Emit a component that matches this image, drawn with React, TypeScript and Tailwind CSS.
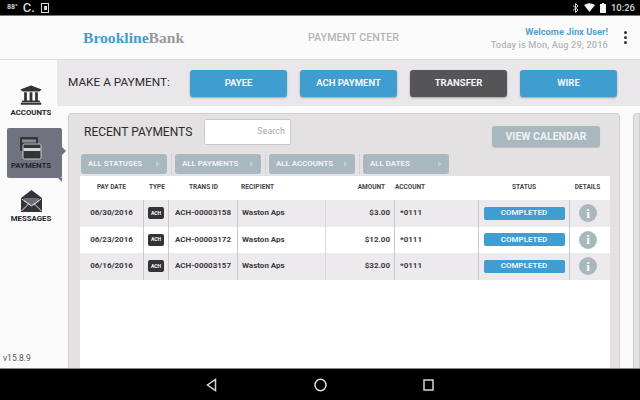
import { Fragment } from "react"
import { FaUniversity } from "react-icons/fa"

const sans = "font-['Roboto',sans-serif]"

const actions = [
  { label: "PAYEE", color: "bg-[#3f9dcf]" },
  { label: "ACH PAYMENT", color: "bg-[#3f9dcf]" },
  { label: "TRANSFER", color: "bg-[#555456]" },
  { label: "WIRE", color: "bg-[#3f9dcf]" },
]

const filters = ["ALL STATUSES", "ALL PAYMENTS", "ALL ACCOUNTS", "ALL DATES"]

const payments = [
  { date: "06/30/2016", id: "ACH-00003158", amount: "$3.00" },
  { date: "06/23/2016", id: "ACH-00003172", amount: "$12.00" },
  { date: "06/16/2016", id: "ACH-00003157", amount: "$32.00" },
]

const cols = "grid grid-cols-[63px_26px_69px_88px_69px_84px_90px_37px]"

function CardsIcon() {
  return (
    <svg width="24" height="24" viewBox="0 0 24 24">
      <rect x="1" y="1" width="18" height="14" rx="1.5" fill="#33343a" />
      <rect x="3" y="3.5" width="14" height="3" fill="#8b8c96" />
      <rect x="4" y="8" width="18" height="15" rx="1.5" fill="#33343a" stroke="#c9cad0" />
      <rect x="4.5" y="12" width="17" height="3" fill="#d5d5da" />
    </svg>
  )
}

function EnvelopeIcon() {
  return (
    <svg width="23" height="24" viewBox="0 0 23 24">
      <path d="M1 9 L11.5 1 L22 9 V23 H1 Z" fill="#33343a" />
      <path d="M4 9 H19 V13 L11.5 17 L4 13 Z" fill="#6d6e74" />
      <path d="M1.5 22 L9 14.5 M21.5 22 L14 14.5 M2 10 L11.5 17 L21 10" stroke="#e8e8e8" strokeWidth="1" fill="none" />
    </svg>
  )
}

function NavItem({ label, icon, active }: { label: string; icon: React.ReactNode; active?: boolean }) {
  return (
    <div className={`relative flex flex-col items-center justify-center w-[55px] h-[50px] ml-[7px] pr-[7px] ${active ? "bg-[#70727f] rounded-[2px]" : ""}`}>
      <div className="h-[24px] flex items-center justify-center">{icon}</div>
      <span className={`${sans} text-[7.8px] font-bold text-[#26262a] leading-[9px] mt-[1px]`}>{label}</span>
      {active && (
        <>
          <div className="absolute right-[-4px] top-[19px] w-0 h-0 border-y-[4px] border-y-transparent border-l-[4px] border-l-[#70727f]" />
          <div className="absolute right-0 bottom-[-4px] w-0 h-0 border-t-[4px] border-t-[#70727f] border-l-[4px] border-l-transparent" />
        </>
      )}
    </div>
  )
}

export default function App() {
  return (
    <div className={`${sans} w-[640px] h-[400px] flex flex-col overflow-hidden bg-[#fafafa]`}>
      {/* status bar */}
      <div className="h-[16px] bg-black border-b border-[#777] flex items-center text-[#d8d8d8] shrink-0">
        <span className="ml-[7px] text-[7px] font-bold leading-none">88°</span>
        <span className="ml-[5px] text-[13px] font-medium leading-none">C.</span>
        <svg className="ml-[6px]" width="8" height="10" viewBox="0 0 8 10">
          <rect x="0.5" y="0.5" width="7" height="9" fill="none" stroke="#d8d8d8" />
          <rect x="3" y="3" width="3" height="4" fill="#d8d8d8" />
        </svg>
        <div className="ml-auto flex items-center mr-[5px]">
          <svg width="7" height="10" viewBox="0 0 7 10" fill="none" stroke="#d8d8d8">
            <path d="M1 2.5 L6 7 L3.5 9.5 V0.5 L6 3 L1 7.5" />
          </svg>
          <svg className="ml-[5px]" width="11" height="9" viewBox="0 0 11 9">
            <path d="M0 2 Q5.5 -1.5 11 2 L5.5 9 Z" fill="#f2f2f2" />
          </svg>
          <svg className="ml-[5px]" width="6" height="10" viewBox="0 0 6 10">
            <path d="M2 0 H4 V1 H6 V10 H0 V1 H2 Z" fill="#f2f2f2" />
          </svg>
          <span className="ml-[5px] text-[9.5px] font-medium leading-none">10:26</span>
        </div>
      </div>

      {/* header */}
      <div className="h-[44px] shrink-0 border-b border-[#dcdcdc] flex items-center bg-[#fbfbfb]">
        <div className="ml-[83px] w-[225px] font-['Liberation_Serif',serif] font-bold text-[15.6px] leading-none">
          <span className="text-[#3f9dcf]">Brookline</span>
          <span className="text-[#9a9a9c]">Bank</span>
        </div>
        <div className="text-[10.6px] font-medium text-[#b3b5b8] tracking-[0.1px]">PAYMENT CENTER</div>
        <div className="ml-auto flex flex-col items-end mr-[16px] leading-[13px]">
          <span className="text-[9.3px] font-bold text-[#4ea3d3]">Welcome Jinx User!</span>
          <span className="text-[9.3px] font-medium text-[#b3b6ba] tracking-[0.1px]">Today is Mon, Aug 29, 2016</span>
        </div>
        <div className="mr-[13px] flex flex-col gap-[2px]">
          <div className="w-[3px] h-[3px] rounded-full bg-[#333]" />
          <div className="w-[3px] h-[3px] rounded-full bg-[#333]" />
          <div className="w-[3px] h-[3px] rounded-full bg-[#333]" />
        </div>
      </div>

      <div className="flex flex-1 min-h-0">
        {/* side nav */}
        <div className="w-[57px] shrink-0 flex flex-col relative z-10">
          <div className="mt-[15px] flex flex-col gap-[3px] w-[68px]">
            <NavItem label="ACCOUNTS" icon={<FaUniversity size={22} color="#33343a" />} />
            <NavItem label="PAYMENTS" icon={<CardsIcon />} active />
            <NavItem label="MESSAGES" icon={<EnvelopeIcon />} />
          </div>
          <div className="mt-auto ml-[3px] mb-[3px] text-[8.5px] text-[#555]">v15.8.9</div>
        </div>

        <div className="flex-1 flex flex-col min-w-0">
          {/* action bar */}
          <div className="h-[46px] shrink-0 bg-[#e9e7e9] flex items-center pl-[11px]">
            <span className="w-[122px] text-[11.8px] text-[#2b2b2d]">MAKE A PAYMENT:</span>
            <div className="flex gap-[13px]">
              {actions.map((a) => (
                <div
                  key={a.label}
                  className={`${a.color} w-[97px] h-[27px] rounded-[3px] shadow-[0_1px_2px_rgba(0,0,0,0.3)] flex items-center justify-center text-[9.5px] font-bold text-[#f1f6f9]`}
                >
                  {a.label}
                </div>
              ))}
            </div>
          </div>

          {/* panels */}
          <div className="flex-1 min-h-0 flex gap-[13px] pt-[7px] pl-[11px]">
            <div className="w-[552px] shrink-0 bg-[#e3e1e1] border border-b-0 border-[#cfcfcf] rounded-t-[4px] flex flex-col">
              <div className="h-[37px] shrink-0 flex items-start pl-[15px] pt-[5px]">
                <span className="w-[120px] h-[26px] flex items-center text-[12px] text-[#2b2b2d]">RECENT PAYMENTS</span>
                <div className="w-[87px] h-[26px] bg-white border border-[#c9c9c9] rounded-[2px] flex items-center justify-end pr-[5px] text-[9px] text-[#aaa]">
                  Search
                </div>
                <div className="ml-[201px] mt-[7px] w-[108px] h-[21px] bg-[#a8b8be] rounded-[3px] shadow-[0_1px_1px_rgba(0,0,0,0.15)] flex items-center justify-center text-[10.5px] font-bold text-[#eef2f3]">
                  VIEW CALENDAR
                </div>
              </div>

              <div className="flex items-center pl-[12px] h-[25px] shrink-0 gap-[3.5px]">
                {filters.map((f, i) => (
                  <Fragment key={f}>
                    {i > 0 && <div className="w-px h-[20px] bg-[#d2d0d1]" />}
                    <div className="w-[86px] h-[20px] bg-[#a8b8be] rounded-[3px] flex items-center justify-between px-[7px] text-[7.9px] font-bold text-[#eef2f3]">
                      <span>{f}</span>
                      <span className="w-0 h-0 border-y-[3px] border-y-transparent border-l-[4px] border-l-[#c2cdd1]" />
                    </div>
                  </Fragment>
                ))}
              </div>

              <div className="ml-[11px] mr-[9px] flex-1 bg-white">
                <div className={`${cols} h-[24px] items-center text-[6.5px] font-bold text-[#444]`}>
                  <span className="text-center">PAY DATE</span>
                  <span className="text-center pl-[2px]">TYPE</span>
                  <span className="text-center">TRANS ID</span>
                  <span className="pl-[3px] tracking-[0.1px]">RECIPIENT</span>
                  <span className="text-right pr-[10px]">AMOUNT</span>
                  <span>ACCOUNT</span>
                  <span className="text-center">STATUS</span>
                  <span className="text-center">DETAILS</span>
                </div>
                {payments.map((p, i) => (
                  <div
                    key={p.id}
                    className={`${cols} h-[26.5px] items-stretch text-[8px] font-bold text-[#3a3a3c] ${i % 2 === 0 ? "bg-[#eceaec]" : "bg-white"}`}
                  >
                    <span className="flex items-center justify-center">{p.date}</span>
                    <span className="flex items-center justify-center border-x border-[#c8c8c8]">
                      <span className="w-[16px] h-[12px] bg-[#333335] rounded-[2px] text-white text-[5px] flex items-center justify-center">ACH</span>
                    </span>
                    <span className="flex items-center justify-center border-r border-[#c8c8c8]">{p.id}</span>
                    <span className="flex items-center pl-[4px] border-r border-[#dcdcdc]">Waston Aps</span>
                    <span className="flex items-center justify-end pr-[4px] border-r border-[#c8c8c8]">{p.amount}</span>
                    <span className="flex items-center pl-[5px] border-r border-[#c8c8c8]">*0111</span>
                    <span className="flex items-center justify-center">
                      <span className="w-[81px] h-[13px] bg-[#3f9dcf] rounded-[2px] flex items-center justify-center text-[8px] text-[#e9f3f9]">COMPLETED</span>
                    </span>
                    <span className="flex items-center justify-center border-l border-[#c8c8c8]">
                      <span className="w-[18px] h-[18px] rounded-full bg-[#a8b8be] flex items-center justify-center font-['Liberation_Serif',serif] font-bold text-[13px] text-white leading-none">i</span>
                    </span>
                  </div>
                ))}
              </div>
            </div>
            <div className="flex-1 bg-[#e3e1e1] border border-b-0 border-[#cfcfcf] rounded-tl-[4px]" />
          </div>
        </div>
      </div>

      {/* android nav */}
      <div className="h-[32px] shrink-0 bg-black border-t border-[#888] flex items-center">
        <svg className="ml-[206px]" width="11" height="14" viewBox="0 0 11 14" fill="none" stroke="#d4d4d4" strokeWidth="1.5">
          <path d="M9.5 1.5 V12.5 L1.5 7 Z" />
        </svg>
        <svg className="ml-[97px]" width="13" height="14" viewBox="0 0 13 14" fill="none" stroke="#e0e0e0" strokeWidth="1.5">
          <ellipse cx="6.5" cy="7" rx="5.5" ry="5.7" />
        </svg>
        <svg className="ml-[96px]" width="11" height="12" viewBox="0 0 11 12" fill="none" stroke="#c8c8c8" strokeWidth="1.6">
          <rect x="1" y="1" width="9" height="10" />
        </svg>
      </div>
    </div>
  )
}
